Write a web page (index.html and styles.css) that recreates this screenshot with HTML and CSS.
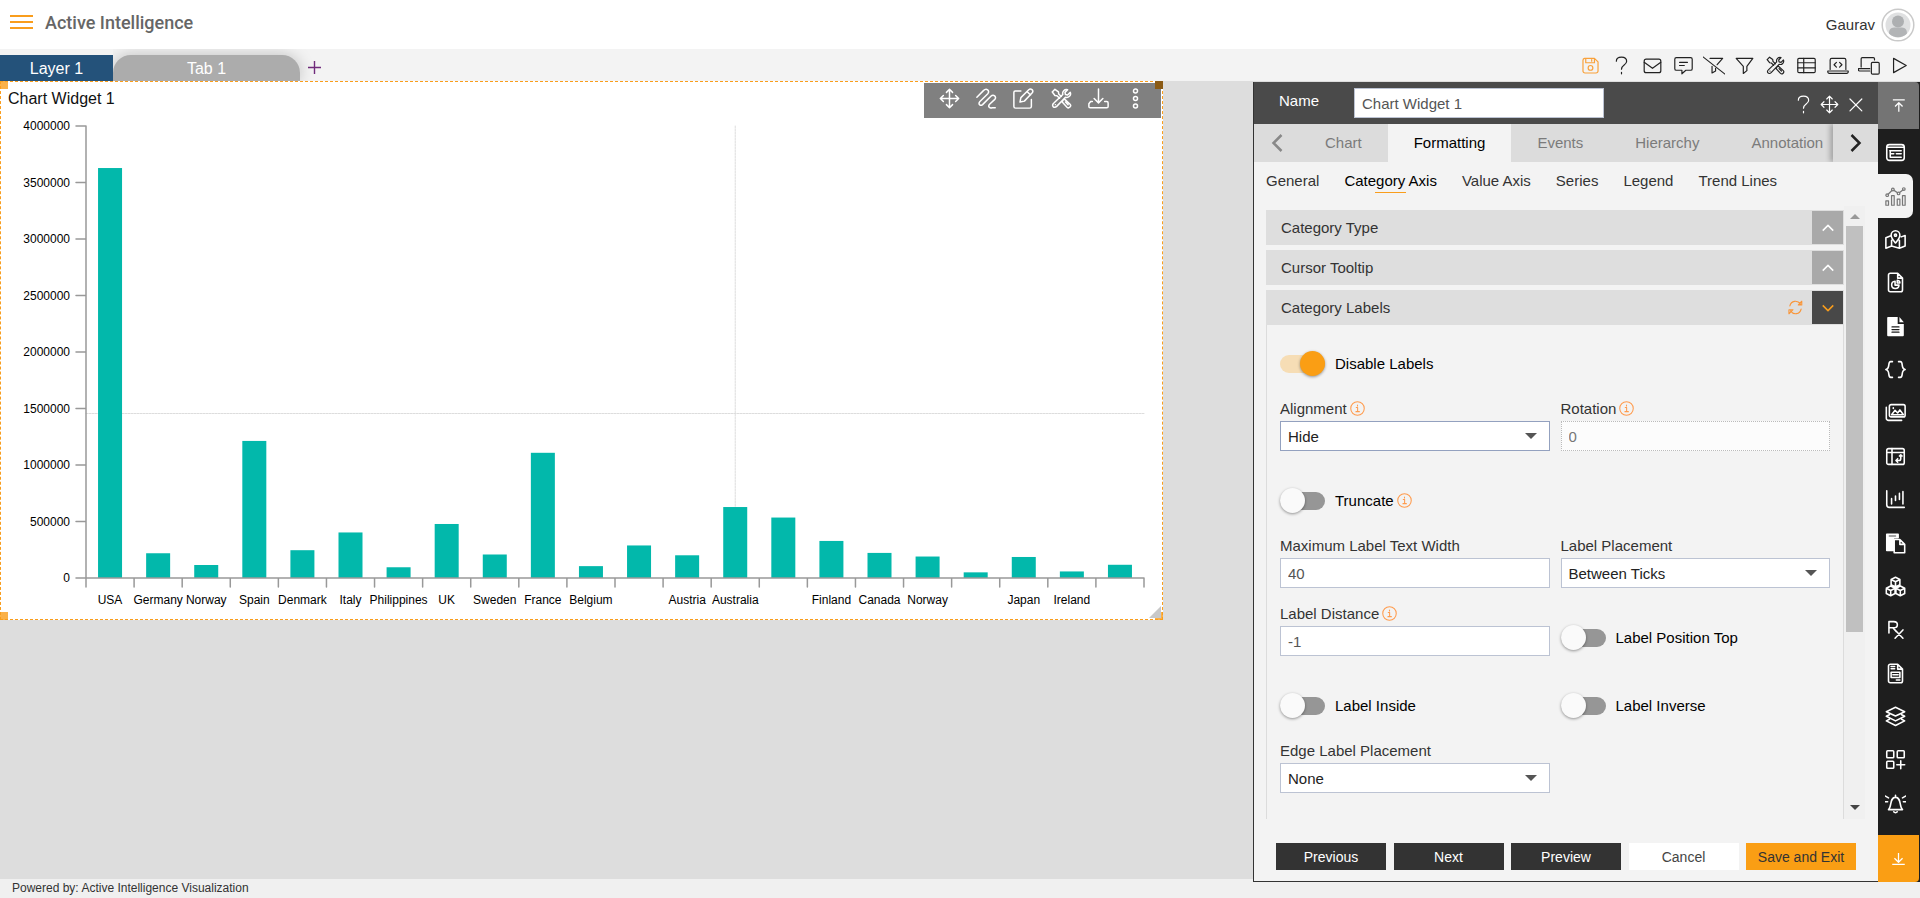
FILE: index.html
```html
<!DOCTYPE html>
<html lang="en">
<head>
<meta charset="utf-8">
<title>Active Intelligence</title>
<link rel="stylesheet" href="styles.css">
</head>
<body>
<svg class="sprite" aria-hidden="true">
  <symbol id="help" viewBox="0 0 24 24"><path d="M5.500 6.500C5.500 3 8.500 1.500 12 1.500c3.800 0 6.500 1.800 6.500 5.200 0 5-6.500 4.500-6.500 10M12 20.500v2"/></symbol>
  <symbol id="move" viewBox="0 0 24 24"><path d="M12 1.500v21M1.500 12h21M8.500 5 12 1.500 15.500 5M8.500 19l3.500 3.500 3.500-3.500M5 8.500 1.500 12 5 15.500M19 8.500l3.500 3.500-3.500 3.500"/></symbol>
  <symbol id="close" viewBox="0 0 24 24"><path d="m5 5 15 15M20 5 5 20"/></symbol>
  <symbol id="tools" viewBox="0 0 24 24"><path d="M1.500 4.500 4.500 1.500l4 3 .3 2.300 3 3M1.500 4.500l3 4 2.300.3 3 3M22 5l-3 3-2.500-.5L16 5l3-3C15.500 1 12.500 4 13.500 7.500L3 17.500c-3 2.500.5 6.500 3.500 3.500L16.500 10.500C20 11.500 23.500 8.500 22 5zM14 13.500l1.800-.5 6 5.500c2 2-1.300 5.500-3.500 3.500l-5.500-6zM16.500 16l3 3M5 19h.1"/></symbol>
  <symbol id="info" viewBox="0 0 24 24"><circle cx="12" cy="12" r="10.800"/><path d="M10 10.500h2.200V17M9.500 17h5.500M12 6.300v1.800"/></symbol>
  <symbol id="up" viewBox="0 0 24 24"><path d="m5 15.500 7-7 7 7"/></symbol>
  <symbol id="down" viewBox="0 0 24 24"><path d="m5 8.500 7 7 7-7"/></symbol>
</svg>

<header class="header">
  <button class="menu" aria-label="Menu"><span></span><span></span><span></span></button>
  <h1 class="brand">Active Intelligence</h1>
  <div class="user">
    <span>Gaurav</span>
    <svg class="avatar" viewBox="0 0 34 34" aria-hidden="true"><circle cx="17" cy="17" r="15.800" fill="#fff" stroke="#c9c9c9"/><circle cx="17" cy="17" r="12.500" fill="#dfe0e1"/><circle cx="17" cy="13.500" r="6" fill="#adafb1"/><path d="M8 25.500c0-7 5-6 9-6s9-1 9 6a12.500 12.500 0 0 1-18 0z" fill="#b2b4b6"/></svg>
  </div>
</header>

<div class="toolbar">
  <nav class="layers">
    <button class="layer">Layer 1</button>
    <button class="tab">Tab 1</button>
    <button class="add" aria-label="Add tab"><svg viewBox="0 0 14 14"><path d="M7 0v14M0 7h14"/></svg></button>
  </nav>
  <div class="tools">
    <button class="save" aria-label="Save"><svg viewBox="0 0 24 24"><path d="M4.500 3H17l4.500 4.500V19a2.500 2.500 0 0 1-2.500 2.500H5A2.500 2.500 0 0 1 2.500 19V5.500A2.500 2.500 0 0 1 4.500 3zM6 3v5.500h11V3M13.500 4.500v2"/><circle cx="12" cy="15" r="3"/></svg></button>
    <button aria-label="Help"><svg><use href="#help"/></svg></button>
    <button aria-label="Mail"><svg viewBox="0 0 24 24"><rect x="1.500" y="4" width="21" height="17" rx="2.500"/><path d="m1.500 8 10.500 7.500L22.500 8"/></svg></button>
    <button aria-label="Comment"><svg viewBox="0 0 24 24"><path d="M3 2h18a2 2 0 0 1 2 2v12a2 2 0 0 1-2 2h-6l-5 4.500V18H3a2 2 0 0 1-2-2V4a2 2 0 0 1 2-2zM7 8h10M7 12h6"/></svg></button>
    <button aria-label="Clear filter"><svg viewBox="0 0 28 24"><path d="M9 3h16l-7 8M11.500 13v8.500l4.500-2.500v-3.500M0 1l28 22"/></svg></button>
    <button aria-label="Filter"><svg viewBox="0 0 24 24"><path d="M1.500 3h21l-7.500 10v5.500L10.500 22v-9z"/></svg></button>
    <button aria-label="Settings"><svg><use href="#tools"/></svg></button>
    <button aria-label="Table"><svg viewBox="0 0 24 24"><rect x="1" y="3" width="22" height="18" rx="1.500"/><path d="M1 8.500h22M1 15h22M8.500 3v18"/></svg></button>
    <button aria-label="Code"><svg viewBox="0 0 28 24"><path d="M4 17V5a2 2 0 0 1 2-2h16a2 2 0 0 1 2 2v12M1 19h26v1.500a2 2 0 0 1-2 1.500H3a2 2 0 0 1-2-1.500zM12 8l-3 3 3 3M16 8l3 3-3 3"/></svg></button>
    <button aria-label="Devices"><svg viewBox="0 0 28 24"><path d="M4 14V3.500A1.500 1.500 0 0 1 5.500 2h14A1.500 1.500 0 0 1 21 3.500V5M15 16H.500v1.500A1.500 1.500 0 0 0 2 19h13"/><rect x="17" y="8" width="10" height="15" rx="1.500"/></svg></button>
    <button aria-label="Run"><svg viewBox="0 0 24 24"><path d="M4.500 3 20.500 12l-16 9z"/></svg></button>
  </div>
</div>

<main class="main">
  <section class="canvas">
    <article class="widget">
      <h2 class="widget-title">Chart Widget 1</h2>
      <svg class="chart" id="chart" viewBox="1 112 1161 507" role="img" aria-label="Bar chart by country"></svg>
      <div class="widget-tools">
        <button aria-label="Move"><svg><use href="#move"/></svg></button>
        <button aria-label="Link"><svg viewBox="0 0 24 24"><path d="M1 10.500 8.500 3C12-.5 16 3 13.500 6.500L4.500 15.500c-2.500 3 .5 5.500 3 3.500L17 9.500c3-3 7 .5 4.500 3.500L15.500 18.500c-2.500 3 .5 5 3 4H22"/></svg></button>
        <button aria-label="Edit"><svg viewBox="0 0 24 24"><path d="M9 3.500H2.500a1.500 1.500 0 0 0-1.500 1.500v16a2 2 0 0 0 2 2h16a2 2 0 0 0 2-2v-8M8 16l1-5 9-9c2.500-2.500 6 1 4 3.500L13 15zM16 4l4 4"/></svg></button>
        <button aria-label="Settings"><svg><use href="#tools"/></svg></button>
        <button aria-label="Download"><svg viewBox="0 0 24 24"><path d="M12 1v16M7 12l5 5 5-5M5 15.500H3l-2 2.500v3A1.500 1.500 0 0 0 2.500 22.500h19A1.500 1.500 0 0 0 23 21v-4a1.500 1.500 0 0 0-1.500-1.500H19"/></svg></button>
        <button aria-label="More"><svg viewBox="0 0 24 24"><circle cx="12" cy="3.500" r="2.300"/><circle cx="12" cy="12" r="2.300"/><circle cx="12" cy="20.500" r="2.300"/></svg></button>
      </div>
      <i class="handle top left"></i><i class="handle top right"></i><i class="handle bottom left"></i><i class="handle bottom right"></i>
      <i class="grip"></i>
    </article>
  </section>

  <aside class="panel">
    <div class="panel-head">
      <label for="name">Name</label>
      <input id="name" class="control" value="Chart Widget 1">
      <div class="head-tools">
        <button aria-label="Help"><svg><use href="#help"/></svg></button>
        <button aria-label="Move"><svg><use href="#move"/></svg></button>
        <button aria-label="Close"><svg><use href="#close"/></svg></button>
      </div>
    </div>
    <div class="tabs">
      <button class="arrow prev" aria-label="Previous tabs"><svg viewBox="0 0 12 18"><path d="m10.500 1-8 8 8 8"/></svg></button>
      <nav class="tab-list">
        <button>Chart</button><button class="active">Formatting</button><button>Events</button><button>Hierarchy</button><button>Annotation</button>
      </nav>
      <button class="arrow next" aria-label="More tabs"><svg viewBox="0 0 12 18"><path d="m1.500 1 8 8-8 8"/></svg></button>
    </div>
    <nav class="subtabs">
      <button>General</button><button class="active">Category Axis</button><button>Value Axis</button><button>Series</button><button>Legend</button><button>Trend Lines</button>
    </nav>
    <div class="panel-body">
      <div class="accordion">
        <div class="section"><h3>Category Type</h3><button class="toggle" aria-label="Expand"><svg><use href="#up"/></svg></button></div>
        <div class="section"><h3>Cursor Tooltip</h3><button class="toggle" aria-label="Expand"><svg><use href="#up"/></svg></button></div>
        <div class="section open"><h3>Category Labels</h3>
          <button class="refresh" aria-label="Reset"><svg viewBox="0 0 24 24"><path d="M3 9.500C5 1 15-.5 20 6.500M22 2v6h-5.500zM21 14.500C19 23 9 24.500 4 17.500M1.500 22v-6.500H8z"/></svg></button>
          <button class="toggle" aria-label="Collapse"><svg><use href="#down"/></svg></button></div>
        <form class="form">
          <div class="row">
            <label class="switch"><input type="checkbox" checked><span>Disable Labels</span></label>
          </div>
          <div class="row wide">
            <div class="field"><label for="align">Alignment<svg class="info"><use href="#info"/></svg></label><div class="select"><select id="align" class="control focus"><option>Hide</option></select></div></div>
            <div class="field"><label for="rot">Rotation<svg class="info"><use href="#info"/></svg></label><input id="rot" class="control" value="0" disabled></div>
          </div>
          <div class="row">
            <label class="switch"><input type="checkbox"><span>Truncate<svg class="info"><use href="#info"/></svg></span></label>
          </div>
          <div class="row tight">
            <div class="field"><label for="maxw">Maximum Label Text Width</label><input id="maxw" class="control" value="40"></div>
            <div class="field"><label for="place">Label Placement</label><div class="select"><select id="place" class="control"><option>Between Ticks</option></select></div></div>
          </div>
          <div class="row wide">
            <div class="field"><label for="dist">Label Distance<svg class="info"><use href="#info"/></svg></label><input id="dist" class="control" value="-1"></div>
            <label class="switch beside"><input type="checkbox"><span>Label Position Top</span></label>
          </div>
          <div class="row">
            <label class="switch"><input type="checkbox"><span>Label Inside</span></label>
            <label class="switch"><input type="checkbox"><span>Label Inverse</span></label>
          </div>
          <div class="row">
            <div class="field"><label for="edge">Edge Label Placement</label><div class="select"><select id="edge" class="control"><option>None</option></select></div></div>
          </div>
        </form>
      </div>
      <div class="scrollbar"><i class="sb-up"></i><i class="sb-track"><i class="sb-thumb"></i></i><i class="sb-down"></i></div>
    </div>
    <div class="actions">
      <button>Previous</button><button>Next</button><button>Preview</button><button class="plain">Cancel</button><button class="primary">Save and Exit</button>
    </div>
  </aside>

  <nav class="rail">
    <button class="rail-top" aria-label="Collapse up"><svg viewBox="0 0 24 24"><path d="M3 3h19M12.500 22V8M6.500 13.500l6-6 6 6"/></svg></button>
    <div class="rail-list">
      <button aria-label="Form"><svg viewBox="0 0 24 24"><rect x="2" y="3" width="20" height="18" rx="3"/><path d="M2 6h20M5.500 10h13M6 10v7.500h12.500M6 13.500h4M13 13.500h5.500"/></svg></button>
      <button class="active" aria-label="Chart"><svg viewBox="0 0 24 24"><rect x="1" y="17" width="3" height="5"/><rect x="7.500" y="11" width="3" height="11"/><rect x="14" y="15" width="3" height="7"/><rect x="20" y="11" width="3" height="11"/><circle cx="2.500" cy="10.500" r="1.500"/><circle cx="9" cy="4" r="1.500"/><circle cx="15.500" cy="8.500" r="1.500"/><circle cx="21.500" cy="3.500" r="1.500"/><path d="m3.600 9.400 4.300-4.300M10.300 5l4 2.700M16.700 7.500l3.700-3"/></svg></button>
      <button aria-label="Map"><svg viewBox="0 0 24 24"><path d="M6 8 1 10v12l6.500-2.500 9 2.500 6.500-2.500V7.500L18.500 9M7.500 13v6.500M16.500 13v9M12 16c-3-4-5-6-5-9a5 5 0 0 1 10 0c0 3-2 5-5 9z"/><circle cx="12" cy="7" r="1.200"/></svg></button>
      <button aria-label="Report"><svg viewBox="0 0 24 24"><path d="M6 1.500h8.500L20 7v13.500a2 2 0 0 1-2 2H6a2 2 0 0 1-2-2v-17a2 2 0 0 1 2-2zM14.500 1.500V7H20M11.500 10.500a4.200 4.200 0 1 0 4.500 4.500h-4.500zM14 9.500c2 .3 3 1.300 3 3h-3z"/></svg></button>
      <button aria-label="Document"><svg viewBox="0 0 24 24"><path d="M3.500 1h11v8h7v13a1 1 0 0 1-1 1h-17a1 1 0 0 1-1-1V2a1 1 0 0 1 1-1zM16.500 1 21.500 7h-5z" fill="currentColor" stroke="none"/><path d="M8 12.500h8M8 15.500h8M8 18.500h8" stroke="#1e1e1e" stroke-width="1.400"/></svg></button>
      <button aria-label="Braces"><svg viewBox="0 0 24 24"><path d="M8.500 3h-2C2.500 3 6.500 11 1 12c5.500 1 1.500 9 5.500 9h2M15.500 3h2c4 0 0 8 5.500 9-5.500 1-1.500 9-5.500 9h-2"/></svg></button>
      <button aria-label="Images"><svg viewBox="0 0 24 24"><rect x="5" y="3" width="18" height="14" rx="2"/><path d="M1.500 6v12.500A2.500 2.500 0 0 0 4 21h15M7.500 14.500l4-5 3 3 2.500-3.500 4 5.500zM9.500 6.500v1"/></svg></button>
      <button aria-label="Pivot"><svg viewBox="0 0 24 24"><rect x="2" y="3" width="20" height="18" rx="2"/><path d="M2 7.500h20M8 3v18M18 10v4.500a2 2 0 0 1-2 2h-3M16.500 11.500 18 10l1.500 1.500M14.500 14.500l-2 2 2 2"/></svg></button>
      <button aria-label="Statistics"><svg viewBox="0 0 24 24"><path d="M2 2v16a3 3 0 0 0 3 3h17M7.500 11v6M12 8v5M16.500 5v7M20.500 3v14"/></svg></button>
      <button aria-label="Copy"><svg viewBox="0 0 24 24"><path d="M2 1.500h13v4H9.500V20H2z" fill="currentColor"/><path d="M5 3.500h7" stroke="#888"/><path d="M10.500 7.500H17l5.500 5.500V22.500h-12zM17 7.500v5.500h5.500"/></svg></button>
      <button aria-label="Modules"><svg viewBox="0 0 24 24"><path d="m12 1.500 5 2.500v6l-5 2.500L7 10V4zM7 4l5 2.500L17 4M12 6.500v6M6.500 11.500l5 2.500v6l-5 2.500-5-2.500v-6zM1.500 14l5 2.500 5-2.500M6.500 16.500v6M17.500 11.500l5 2.500v6l-5 2.500-5-2.500v-6zM12.500 14l5 2.500 5-2.500M17.500 16.500v6"/></svg></button>
      <button aria-label="Prescription"><svg viewBox="0 0 24 24"><path d="M4.500 16V3H10c5.500 0 5.500 7 0 7H4.500M9 10l4 4.500M11.500 22l9-9.500M11.500 12.500l9 9.500"/></svg></button>
      <button aria-label="File"><svg viewBox="0 0 24 24"><path d="M6 1.500h8.500L20 7v13.500a2 2 0 0 1-2 2H6a2 2 0 0 1-2-2v-17a2 2 0 0 1 2-2zM14.500 1.500V7H20M7 4h4M7 6.500h4M7 10.500h10v6H7zM13 19.500h4M9 13.500h6"/></svg></button>
      <button aria-label="Layers"><svg viewBox="0 0 24 24"><path d="m12 1.500 10.500 5L12 11.500l-10.500-5zM5 10l-3.500 1.800L12 17l10.500-5.200L19 10M5 15.200l-3.500 1.800L12 22.200 22.500 17 19 15.200"/></svg></button>
      <button aria-label="Add widget"><svg viewBox="0 0 24 24"><rect x="2" y="2" width="8" height="8" rx="1"/><rect x="14" y="2" width="8" height="8" rx="1"/><rect x="2" y="14" width="8" height="8" rx="1"/><path d="M18 13.500v9M13.500 18h9"/></svg></button>
      <button aria-label="Alerts"><svg viewBox="0 0 24 24"><path d="M4 19c4-3 1-14 8-14s4 11 8 14zM12 2.500V5M10 21.500c1 1.300 3 1.300 4 0M.5 3.500l3.500 2M0 10h3M23.500 3.500l-3.500 2M21 10h3"/></svg></button>
    </div>
    <button class="rail-bottom" aria-label="Download"><svg viewBox="0 0 24 24"><path d="M2 21.500h20M12 3v14M5.500 11.500 12 18l6.500-6.500"/></svg></button>
  </nav>
</main>

<footer class="footer">Powered by: Active Intelligence Visualization</footer>
<script src="chart.js"></script>
</body>
</html>
```
FILE: styles.css
```css
* { box-sizing: border-box; }
body { margin: 0; min-height: 100vh; display: flex; flex-direction: column; font-family: "Liberation Sans", Arial, sans-serif; font-size: 15px; color: #333; background: #fff; }
button { font: inherit; color: inherit; border: 0; padding: 0; background: none; display: flex; align-items: center; justify-content: center; cursor: pointer; white-space: nowrap; }
h1, h2, h3 { margin: 0; font-weight: normal; }
svg { fill: none; stroke: currentColor; stroke-width: 1.5; stroke-linejoin: round; stroke-linecap: round; flex: none; }
.sprite { display: none; }

.header { height: 49px; display: flex; align-items: center; padding: 0 5px 0 10px; }
.menu { width: 23px; flex-direction: column; gap: 4px; margin: 0 12px 5px 0; }
.menu span { width: 23px; height: 2px; background: #f99d1c; }
.brand { font-family: Roboto, "Liberation Sans", sans-serif; font-size: 18px; font-weight: 500; color: #666; padding-bottom: 4px; }
.user { margin-left: auto; display: flex; align-items: center; gap: 6px; }
.avatar { width: 34px; height: 34px; stroke: none; }

.toolbar { height: 32px; background: #f3f3f3; display: flex; justify-content: space-between; }
.layers { display: flex; align-items: flex-end; font-size: 16px; color: #fff; }
.layer { width: 113px; height: 26px; background: #24527a; padding-top: 1px; }
.tab { width: 187px; height: 26px; padding-top: 1px; background: #acacac; border-radius: 18px 18px 0 0; box-shadow: 0 0 16px rgba(0,0,0,.22); clip-path: inset(-6px -16px 0 0); }
.add { width: 28px; height: 28px; color: #712c7c; }
.add svg { width: 13px; height: 13px; stroke-linecap: butt; }
.tools { width: 332px; display: flex; justify-content: space-between; margin-right: 9px; color: #222; }
.tools button { width: 23px; padding-top: 1px; }
.tools svg { width: 19px; height: 19px; }
.tools svg[viewBox="0 0 28 24"] { width: 22px; }
.tools .save { color: #f9a13a; }

.main { flex: 1; display: flex; background: #ddd; }
.canvas { flex: 1; min-width: 0; }
.widget { position: relative; width: calc(100% - 90px); background: #fff; border: 1px dashed #f99d1c; }
.widget-title { height: 30px; line-height: 34px; padding-left: 7px; font-size: 16px; color: #111; }
.chart { display: block; width: 100%; stroke: none; }
.chart text { font-size: 12px; fill: #000; }
.axis { stroke: #999; stroke-width: 1.5; }
.cursor { stroke: #ddd; stroke-width: 1; stroke-dasharray: 2 1; }
.bar { fill: #02b8ab; }
.mid { text-anchor: middle; }
.end { text-anchor: end; }
.widget-tools { position: absolute; top: 1px; right: 1px; width: 237px; height: 35px; padding: 0 13px 4px; display: flex; justify-content: space-between; background: #808080; color: #fff; }
.widget-tools button { width: 24px; }
.widget-tools svg { width: 21px; height: 21px; stroke-width: 1.7; }
.handle { position: absolute; width: 8px; height: 8px; background: #f99d1c; opacity: .8; }
.top { top: -1px; } .bottom { bottom: -1px; } .left { left: -1px; } .right { right: -1px; }
.top.right { background: #8a5a14; opacity: 1; }
.grip { position: absolute; right: 1px; bottom: 1px; border: solid transparent; border-width: 0 0 12px 12px; border-bottom-color: #c8c8c8; }

.panel { position: relative; width: 625px; margin: 1px 0 -3px; background: #f3f3f3; border: 1px solid #333; border-width: 0 0 1px 1px; display: flex; flex-direction: column; }
.panel-head { height: 42px; background: #4a4a4a; color: #fff; display: flex; align-items: center; padding: 0 13px 0 25px; }
.panel-head label { width: 75px; padding-bottom: 5px; }
.panel-head input { width: 250px; }
.control { display: block; width: 100%; height: 30px; border: 1px solid #bcc3d3; border-radius: 0; padding: 0 7px; background: #fff; font: inherit; color: #555; }
.head-tools { margin-left: auto; display: flex; gap: 6px; color: #fff; padding-top: 3px; }
.head-tools button { width: 20px; }
.head-tools svg { width: 19px; height: 19px; }
.tabs { height: 38px; background: #dcdcdc; display: flex; color: #7b7b7b; }
.arrow { width: 45px; flex: none; }
.arrow svg { width: 12px; height: 18px; stroke-width: 2.5; stroke-linecap: butt; stroke-linejoin: miter; }
.prev { color: #888; }
.next { color: #222; box-shadow: -3px 0 5px rgba(0,0,0,.25); clip-path: inset(0 0 0 -8px); }
.tab-list { flex: 1; min-width: 0; display: flex; overflow: hidden; }
.tab-list button { padding: 0 26px 1px; flex: none; }
.tab-list .active { background: #f3f3f3; color: #000; }
.subtabs { height: 44px; display: flex; gap: 25px; padding: 0 12px 8px; }
.subtabs .active { position: relative; color: #000; }
.subtabs .active::after { content: ""; position: absolute; left: 33%; right: 33%; bottom: 5px; height: 1px; background: #f99d1c; }
.panel-body { flex: 1; display: flex; padding: 0 13px 0 12px; }
.accordion { flex: 1; padding-top: 4px; display: flex; flex-direction: column; }
.section { height: 35px; margin-bottom: 5px; padding: 1px; background: #dedede; display: flex; align-items: stretch; }
.section.open { margin-bottom: 0; }
.section h3 { flex: 1; font-size: 15px; line-height: 34px; padding-left: 14px; }
.toggle { width: 31px; background: #a9a9a9; color: #fff; }
.toggle svg { width: 18px; height: 18px; stroke-width: 2; stroke-linecap: butt; }
.open .toggle { background: #484848; color: #f99d1c; }
.refresh { width: 18px; margin-right: 8px; color: #f9963a; }
.refresh svg { width: 15px; height: 15px; stroke-width: 1.8; }
.form { flex: 1; border: solid #dcdcdc; border-width: 0 1px; padding: 26px 13px 0; }
.row { display: grid; grid-template-columns: 1fr 1fr; gap: 11px; margin-bottom: 22px; }
.row.wide { margin-bottom: 37px; }
.row.tight { margin-bottom: 15px; }
.field { display: flex; flex-direction: column; gap: 3px; }
.field label { height: 20px; display: flex; align-items: center; }
.info { width: 15px; height: 15px; margin-left: 3px; color: #ff9b4d; stroke-width: 1.7; }
.switch { height: 25px; display: flex; align-items: center; gap: 10px; color: #000; }
.switch span { display: flex; align-items: center; }
.beside { align-self: end; margin-bottom: 6px; }
.switch input { appearance: none; margin: 0; width: 45px; height: 18px; border-radius: 9px; background: #969696; display: flex; align-items: center; }
.switch input::before { content: ""; width: 25px; height: 25px; border-radius: 50%; background: #fafafa; box-shadow: 0 1px 3px rgba(0,0,0,.4); flex: none; }
.switch input:checked { background: #f6ddb5; justify-content: flex-end; }
.switch input:checked::before { background: #fa9e14; }
.select { position: relative; }
.select::after { content: ""; position: absolute; right: 13px; top: 12px; border: 6px solid transparent; border-top-color: #555; border-bottom: 0; pointer-events: none; }
select.control { appearance: none; color: #222; }
select.focus { border-color: #93a1bf; }
.control:disabled { border: 1px dotted #bbb; color: #777; background: #fcfcfc; }
.scrollbar { width: 21px; display: flex; flex-direction: column; align-items: center; background: #f0f0f0; padding: 8px 0 9px; }
.sb-up, .sb-down { border: 5px solid transparent; }
.sb-up { border-top: 0; border-bottom-color: #999; }
.sb-down { border-bottom: 0; border-top-color: #444; }
.sb-track { flex: 1; width: 17px; margin: 7px 0; }
.sb-thumb { display: block; height: 71%; background: #c0c0c0; }
.actions { height: 62px; padding: 24px 22px 11px; display: flex; justify-content: space-between; font-size: 14px; }
.actions button { width: 110px; background: #333; color: #fff; }
.actions .plain { background: #fff; color: #444; }
.actions .primary { background: #fa9e14; color: #333; }

.rail { position: relative; width: 42px; margin: 1px 0 -3px; background: #1e1e1e; color: #fff; display: flex; flex-direction: column; }
.rail-top, .rail-bottom { width: 41px; height: 47px; }
.rail-top { background: #747474; border-radius: 0 4px 0 0; }
.rail-bottom { background: #fa9e14; border-radius: 0 0 4px 0; }
.rail-top svg, .rail-bottom svg { width: 15px; height: 15px; stroke-width: 2; stroke-linecap: butt; }
.rail-list { flex: 1; display: flex; flex-direction: column; padding: 2px 0 10px; }
.rail-list button { flex: 1; width: 35px; }
.rail-list svg { width: 21px; height: 21px; stroke-width: 1.8; }
.rail-list .active { background: #f3f3f3; color: #777; border-radius: 0 7px 7px 0; }
.rail-list .active svg { stroke-width: 1.4; }

.footer { height: 19px; line-height: 18px; padding-left: 12px; background: #f0f0f0; font-size: 12px; }
```
FILE: chart.js
```javascript
const data = [
  ["USA", 3628000], ["Germany", 219000], ["Norway", 115000], ["Spain", 1213000],
  ["Denmark", 246000], ["Italy", 403000], ["Philippines", 95000], ["UK", 478000],
  ["Sweden", 208000], ["France", 1108000], ["Belgium", 105000], ["", 288000],
  ["Austria", 201000], ["Australia", 628000], ["", 535000], ["Finland", 328000],
  ["Canada", 222000], ["Norway", 190000], ["", 50000], ["Japan", 186000],
  ["Ireland", 58000], ["", 117000]
];
const left = 86, right = 1144, top0 = 126, base = 578, max = 4000000;
const step = (right - left) / data.length;
const y = v => base - v / max * (base - top0);
const cx = left + step * 13.5;
let out = `<path class="cursor" d="M${cx} ${top0}V${base}M${left} 413.5H${right}"/>`;
data.forEach(([name, v], i) => {
  const mid = left + step * (i + 0.5);
  out += `<rect class="bar" x="${mid - 12}" y="${y(v)}" width="24" height="${base - y(v)}"/>`;
  if (name) out += `<text class="mid" x="${mid}" y="604">${name}</text>`;
});
let axis = `M${left} ${top0}V${base}M${left} ${base}H${right}`;
for (let i = 0; i <= data.length; i++) axis += `M${left + step * i} ${base}v9`;
for (let v = 0; v <= max; v += 500000) {
  axis += `M${left - 10} ${y(v)}h10`;
  out += `<text class="end" x="70" y="${y(v) + 4}">${v}</text>`;
}
document.getElementById("chart").innerHTML = out + `<path class="axis" d="${axis}"/>`;
```
